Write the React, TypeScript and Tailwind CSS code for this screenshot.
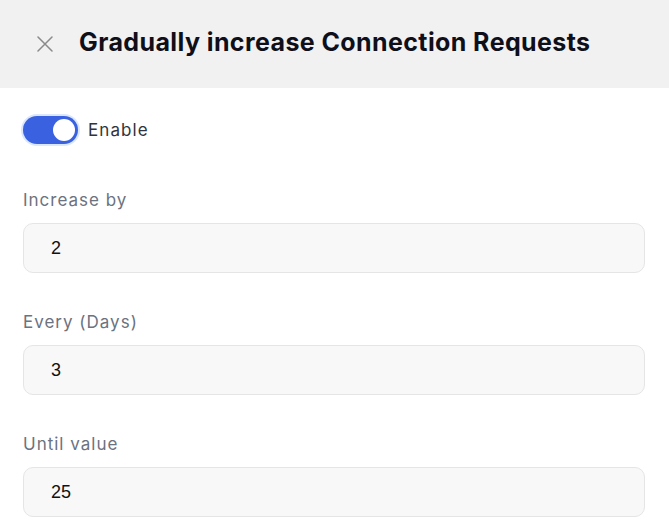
import { useState } from 'react'

// ─── Field ────────────────────────────────────────────────────────────────────

function Field({ label, value }: { label: string; value: string }) {
  return (
    <div className="flex flex-col">
      <label className="text-[17px] leading-[24px] tracking-[1px] text-[#6b7280]">{label}</label>
      <input
        readOnly
        value={value}
        className="mt-[11px] h-[50px] w-full rounded-[10px] border border-[#e5e5e5] bg-[#f8f8f8] px-[27px] text-[18px] text-[#111] font-['Liberation_Sans',Arial,sans-serif] outline-none"
      />
    </div>
  )
}

// ─── Component ────────────────────────────────────────────────────────────────

export default function App() {
  const [enabled, setEnabled] = useState(true)

  return (
    <div className="w-[669px] h-[525px] bg-white overflow-hidden font-['Inter',sans-serif]">
      {/* Header */}
      <div className="flex h-[88px] items-center bg-[#f1f1f1] pb-[3px] pl-[37px]">
        <svg width="16" height="16" viewBox="0 0 16 16" className="mt-[3px] shrink-0">
          <path d="M1 1L15 15M15 1L1 15" stroke="#8a8a8a" strokeWidth="1.5" strokeLinecap="round" />
        </svg>
        <h1 className="ml-[26px] text-[25px] font-bold leading-none tracking-[0.4px] text-[#0f0f1a]">
          Gradually increase Connection Requests
        </h1>
      </div>

      {/* Body */}
      <div className="flex flex-col pl-[23px] pr-[24px] pt-[28px]">
        <div className="flex items-center">
          <button
            onClick={() => setEnabled(!enabled)}
            className="flex h-[28px] w-[55px] items-center rounded-full bg-[#3a62e0] p-[3px] ring-2 ring-[#dbe7ff]"
          >
            <span className={`h-[22px] w-[22px] rounded-full bg-white ${enabled ? 'ml-auto' : ''}`} />
          </button>
          <span className="ml-[10px] mt-[1px] text-[17px] tracking-[1.1px] text-[#2f3440]">Enable</span>
        </div>

        <div className="mt-[44px] flex flex-col gap-[37px]">
          <Field label="Increase by" value="2" />
          <Field label="Every (Days)" value="3" />
          <Field label="Until value" value="25" />
        </div>
      </div>
    </div>
  )
}
